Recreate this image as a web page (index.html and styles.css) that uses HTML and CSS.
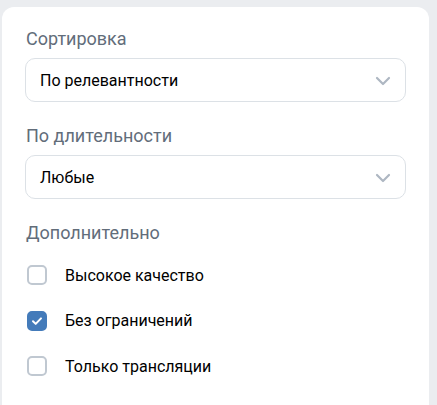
FILE: index.html
```html
<!DOCTYPE html>
<html lang="ru">
<head>
<meta charset="utf-8">
<title>Фильтры</title>
<link rel="stylesheet" href="styles.css">
</head>
<body>
<div class="panel">
  <section class="group">
    <h3 class="group-title">Сортировка</h3>
    <div class="select">
      <span class="select-value">По релевантности</span>
      <svg class="chevron" width="16" height="10" viewBox="0 0 16 10"><path d="M2 2l6 6 6-6" fill="none" stroke="#aeb7c2" stroke-width="2.2" stroke-linecap="round" stroke-linejoin="round"/></svg>
    </div>
  </section>
  <section class="group">
    <h3 class="group-title">По длительности</h3>
    <div class="select">
      <span class="select-value">Любые</span>
      <svg class="chevron" width="16" height="10" viewBox="0 0 16 10"><path d="M2 2l6 6 6-6" fill="none" stroke="#aeb7c2" stroke-width="2.2" stroke-linecap="round" stroke-linejoin="round"/></svg>
    </div>
  </section>
  <section class="group">
    <h3 class="group-title">Дополнительно</h3>
    <ul class="checks">
      <li class="check"><span class="box"></span>Высокое качество</li>
      <li class="check"><span class="box box-on"><svg width="14" height="14" viewBox="0 0 14 14"><path d="M3 7.3l2.7 2.6L11 4.4" fill="none" stroke="#fff" stroke-width="2" stroke-linecap="round" stroke-linejoin="round"/></svg></span>Без ограничений</li>
      <li class="check"><span class="box"></span>Только трансляции</li>
    </ul>
  </section>
</div>
</body>
</html>
```
FILE: styles.css
```css
html, body {
  margin: 0;
  padding: 0;
}
body {
  background: #ebedf0;
  font-family: Roboto, "Noto Sans", Arial, sans-serif;
  height: 405px;
  overflow: hidden;
}
.panel {
  margin: 7px 0 0 2px;
  width: 427px;
  height: 398px;
  box-sizing: border-box;
  background: #fff;
  border-radius: 12px 12px 0 0;
  padding: 22px 23px 0 23px;
}
.group {
  margin-bottom: 24px;
}
.group-title {
  margin: 0 0 9px 1px;
  font-size: 18px;
  line-height: 20px;
  font-weight: 400;
  color: #626d7a;
}
.select {
  height: 44px;
  box-sizing: border-box;
  border: 1px solid #dce1e6;
  border-radius: 10px;
  display: flex;
  align-items: center;
  justify-content: space-between;
  padding: 0 14px 0 14px;
}
.select-value {
  font-size: 16px;
  color: #000;
}
.chevron {
  margin-top: 1px;
}
.checks {
  list-style: none;
  margin: 0;
  padding: 13px 0 0 2px;
}
.check {
  display: flex;
  align-items: center;
  height: 20px;
  margin-bottom: 25.5px;
  font-size: 16px;
  color: #000;
}
.box {
  width: 20px;
  height: 20px;
  box-sizing: border-box;
  border: 2px solid #c0c8d1;
  border-radius: 5px;
  margin-right: 18px;
  display: flex;
  align-items: center;
  justify-content: center;
  flex: none;
}
.box-on {
  background: #447bba;
  border-color: #447bba;
}
```
